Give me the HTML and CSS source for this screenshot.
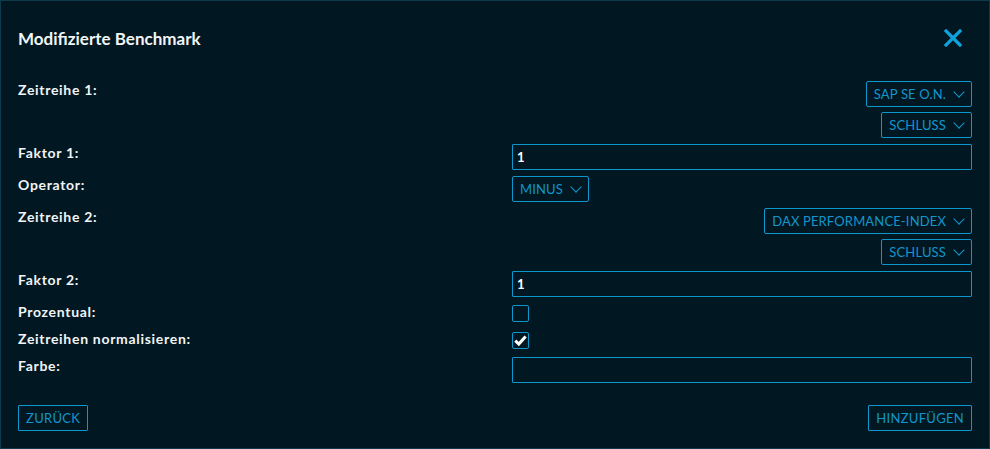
FILE: index.html
```html
<!DOCTYPE html>
<html lang="de">
<head>
    <meta charset="UTF-8">
    <meta name="viewport" content="width=device-width, initial-scale=1.0">
    <title>Modifizierte Benchmark</title>
    <link rel="stylesheet" href="styles.css">
</head>
<body>
    <div class="modal">
        <div class="modal-head">
            <h2>Modifizierte Benchmark</h2>
            <button class="close" aria-label="Schließen">
                <svg width="18" height="18" viewBox="0 0 18 18"><path d="M2 2 L16 16 M16 2 L2 16" stroke="currentColor" stroke-width="3.2" stroke-linecap="square"/></svg>
            </button>
        </div>
        <div class="form">
            <div class="row">
                <label>Zeitreihe 1:</label>
                <div class="ctrl stack">
                    <div class="select">SAP SE O.N. <span class="chev"></span></div>
                    <div class="select">Schluss <span class="chev"></span></div>
                </div>
            </div>
            <div class="row">
                <label for="faktor1">Faktor 1:</label>
                <div class="ctrl"><input type="text" id="faktor1" class="field" value="1"></div>
            </div>
            <div class="row">
                <label>Operator:</label>
                <div class="ctrl left">
                    <div class="select">Minus <span class="chev"></span></div>
                </div>
            </div>
            <div class="row">
                <label>Zeitreihe 2:</label>
                <div class="ctrl stack">
                    <div class="select">DAX Performance-Index <span class="chev"></span></div>
                    <div class="select">Schluss <span class="chev"></span></div>
                </div>
            </div>
            <div class="row">
                <label for="faktor2">Faktor 2:</label>
                <div class="ctrl"><input type="text" id="faktor2" class="field" value="1"></div>
            </div>
            <div class="row check-row">
                <label>Prozentual:</label>
                <div class="ctrl"><span class="box"></span></div>
            </div>
            <div class="row check-row">
                <label>Zeitreihen normalisieren:</label>
                <div class="ctrl">
                    <span class="box">
                        <svg width="15" height="15" viewBox="0 0 15 15"><path d="M2.3 7.6 L5.8 11 L12.6 3.4" fill="none" stroke="#fff" stroke-width="3"/></svg>
                    </span>
                </div>
            </div>
            <div class="row">
                <label for="farbe">Farbe:</label>
                <div class="ctrl"><input type="text" id="farbe" class="field"></div>
            </div>
        </div>
        <div class="modal-foot">
            <button class="btn">Zurück</button>
            <button class="btn">Hinzufügen</button>
        </div>
    </div>
</body>
</html>
```

FILE: styles.css
```css
body, html {
    margin: 0;
    padding: 0;
    background-color: #011823;
    font-family: Lato, "Noto Sans", sans-serif;
}
.modal {
    width: 990px;
    height: 449px;
    box-sizing: border-box;
    border: 1px solid #0d3a4d;
    background-color: #011823;
    padding: 0 17px;
    color: #f2f4f5;
}
.modal-head {
    height: 74px;
    display: flex;
    justify-content: space-between;
    align-items: center;
}
.modal-head h2 {
    margin: 0;
    font-size: 17px;
    font-weight: 700;
}
.close {
    background: none;
    border: none;
    padding: 0;
    margin-right: 10px;
    color: #0ea3da;
    display: flex;
    cursor: pointer;
}
.form {
    margin-top: 6px;
}
.row {
    display: flex;
    margin-bottom: 6px;
}
.row label {
    width: 494px;
    flex: none;
    font-size: 14px;
    font-weight: 700;
    letter-spacing: 0.7px;
    line-height: 17px;
}
.ctrl {
    flex: 1;
    display: flex;
}
.ctrl.stack {
    flex-direction: column;
    align-items: flex-end;
    gap: 5px;
}
.select {
    height: 26px;
    box-sizing: border-box;
    border: 1px solid #0c97cf;
    border-radius: 2px;
    display: inline-flex;
    align-items: center;
    gap: 9px;
    padding: 0 6px 0 7px;
    color: #1296cc;
    font-size: 13px;
    text-transform: uppercase;
    letter-spacing: 0.15px;
    cursor: pointer;
}
.chev {
    width: 7px;
    height: 7px;
    border-right: 1.5px solid #1296cc;
    border-bottom: 1.5px solid #1296cc;
    transform: rotate(45deg);
    margin: -4px 2px 0 0;
}
.field {
    width: 100%;
    height: 26px;
    box-sizing: border-box;
    border: 1px solid #0c97cf;
    border-radius: 1px;
    background: transparent;
    color: #fff;
    font-family: inherit;
    font-size: 13px;
    font-weight: 700;
    padding: 0 4px;
    outline: none;
}
.check-row {
    height: 21px;
}
.box {
    width: 17px;
    height: 17px;
    box-sizing: border-box;
    border: 1px solid #0c97cf;
    border-radius: 2px;
    margin-top: 2px;
    display: flex;
    align-items: center;
    justify-content: center;
}
.modal-foot {
    margin-top: 22px;
    display: flex;
    justify-content: space-between;
}
.btn {
    height: 26px;
    box-sizing: border-box;
    border: 1px solid #0c97cf;
    border-radius: 1px;
    background: transparent;
    color: #1296cc;
    font-family: inherit;
    font-size: 13px;
    text-transform: uppercase;
    letter-spacing: 0.3px;
    padding: 0 7px;
    cursor: pointer;
}
```
